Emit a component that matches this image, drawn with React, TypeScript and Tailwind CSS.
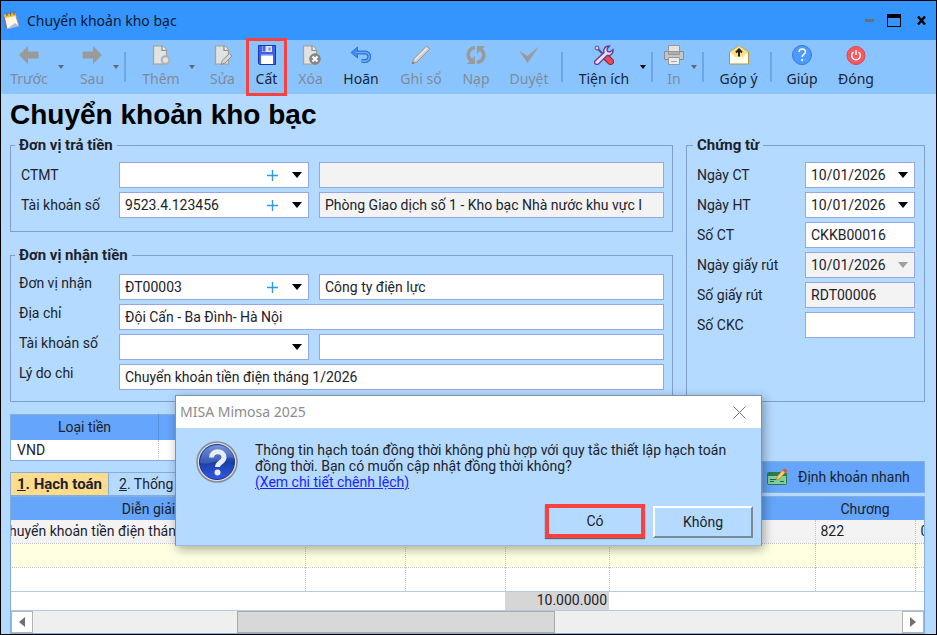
import type { ReactNode } from 'react';

interface Tool {
  label: string;
  icon: ReactNode;
  box: string;
  disabled?: boolean;
  menu?: boolean;
  marked?: boolean;
  divider?: boolean;
}

const GREY = '#9a9a9a';

function Icon({ children }: { children: ReactNode }) {
  return (
    <svg viewBox="0 0 20 20" className="h-5 w-5" fill="none" aria-hidden="true">
      {children}
    </svg>
  );
}

function Page() {
  return (
    <>
      <path d="M2.500.8h9l4 4v14.400h-13z" fill="#e2e2e2" stroke="#a2a2a2" strokeWidth="1.300" />
      <path d="M11 .8v4.500h4.500" fill="#f4f4f4" stroke="#8f8f8f" strokeWidth="1.300" />
    </>
  );
}

const tools: Tool[] = [
  {
    label: 'Trước',
    box: 'w-[50px]',
    disabled: true,
    menu: true,
    icon: <Icon><path d="M0 10 9 1v5.500h10.500v7H9V19z" fill={GREY} /></Icon>,
  },
  {
    label: 'Sau',
    box: 'ml-[7px] w-[34px]',
    disabled: true,
    menu: true,
    divider: true,
    icon: <Icon><path d="M20 10 11 1v5.500H.5v7H11V19z" fill={GREY} /></Icon>,
  },
  {
    label: 'Thêm',
    box: 'ml-[10px] w-[48px]',
    disabled: true,
    menu: true,
    icon: (
      <Icon>
        <Page />
        <circle cx="14.500" cy="15" r="3.800" fill="#e2e2e2" stroke="#b0b0b0" strokeWidth="2" />
      </Icon>
    ),
  },
  {
    label: 'Sửa',
    box: 'w-[47px]',
    disabled: true,
    icon: (
      <Icon>
        <Page />
        <path d="m8 19.500 1.500-4.500 7-6.500 2.500 2.500-7 7z" fill="#d6d6d6" stroke="#8f8f8f" />
      </Icon>
    ),
  },
  {
    label: 'Cất',
    box: 'w-[41px]',
    marked: true,
    icon: (
      <Icon>
        <path d="M1.500.5h17v19h-16l-1-1z" fill="#4060e8" stroke="#1c35b8" />
        <path d="M5 1h10v6H5z" fill="#dfe5fb" />
        <path d="M5.500 1h3v5.500h-3z" fill="#4060e8" />
        <path d="M11.500 2.500h2v3h-2z" fill="#7388d8" />
        <path d="M4 10.500h12v8.500H4z" fill="#fff" />
        <path d="M4 10h12" stroke="#b9c6f5" />
      </Icon>
    ),
  },
  {
    label: 'Xóa',
    box: 'w-[47px]',
    disabled: true,
    icon: (
      <Icon>
        <Page />
        <circle cx="14" cy="14" r="5.800" fill="#858585" />
        <path d="m11.500 11.500 5 5m0-5-5 5" stroke="#fff" strokeWidth="2" />
      </Icon>
    ),
  },
  {
    label: 'Hoãn',
    box: 'w-[54px]',
    icon: (
      <Icon>
        <path d="M6 7.500h8a4.300 4.300 0 0 1 0 8.600h-3.500" stroke="#2c74dc" strokeWidth="4" />
        <path d="M0 7.500 6.500 2v11z" fill="#3f8bf0" stroke="#2c74dc" />
        <path d="M5 7.500h9a4.300 4.300 0 0 1 0 8.600h-3" stroke="#69a9fb" strokeWidth="1.600" />
      </Icon>
    ),
  },
  {
    label: 'Ghi sổ',
    box: 'w-[66px]',
    disabled: true,
    icon: (
      <Icon>
        <path d="m1 19 1.500-5L15.500 1 19 4 6 17z" fill="#cdcdcd" stroke="#999" />
        <path d="m4 15 12-12" stroke="#ececec" strokeWidth="1.500" />
        <path d="m1 19 .8-2.800 2 1.800z" fill="#777" />
      </Icon>
    ),
  },
  {
    label: 'Nạp',
    box: 'w-[44px]',
    disabled: true,
    icon: (
      <Icon>
        <path d="M9 2.500C1 4 .5 12 5.500 16M11 17.500C19 16 19.500 8 14.500 4" stroke={GREY} strokeWidth="3.600" />
        <path d="M1 19h8v-8zM19 1h-8v8z" fill={GREY} />
      </Icon>
    ),
  },
  {
    label: 'Duyệt',
    box: 'w-[62px]',
    disabled: true,
    divider: true,
    icon: <Icon><path d="M0 5.500 8.500 18 20 1.500 8.500 11z" fill={GREY} /></Icon>,
  },
  {
    label: 'Tiện ích',
    box: 'ml-[8px] w-[64px]',
    menu: true,
    divider: true,
    icon: (
      <Icon>
        <path d="m3 3 8 8" stroke="#5a4d94" strokeWidth="2" />
        <circle cx="3" cy="3" r="2" fill="#cfc8ef" stroke="#5a4d94" />
        <path d="m12.500 12.500 4 4" stroke="#8f1f35" strokeWidth="7" strokeLinecap="round" />
        <path d="m12.500 12.500 4 4" stroke="#e84a55" strokeWidth="5" strokeLinecap="round" />
        <path
          d="M1 16 10 7.500c-1-3.500 1.500-7 5.500-6.500L13 4l.5 2.500L16 7l3-2.500c.5 4-2.500 6.500-6 6L4.500 19C2 20.500-.5 18 1 16z"
          fill="#e6dff8"
          stroke="#6b3f8f"
          strokeWidth="1.400"
        />
      </Icon>
    ),
  },
  {
    label: 'In',
    box: 'ml-[7px] w-[26px]',
    disabled: true,
    menu: true,
    divider: true,
    icon: (
      <Icon>
        <path d="M4.500.5h11v7h-11z" fill="#e3e3e3" stroke="#979797" />
        <path d="M.5 6.500h19v8H.5z" fill="#c6c6c6" stroke="#8b8b8b" />
        <path d="M4.500 6.500h11v3h-11z" fill="#b0b0b0" stroke="#979797" />
        <path d="M4.500 12.500h11v7h-11z" fill="#ececec" stroke="#979797" />
        <path d="M7 16.500h6" stroke="#a5a5a5" />
      </Icon>
    ),
  },
  {
    label: 'Góp ý',
    box: 'ml-[3px] w-[61px]',
    divider: true,
    icon: (
      <Icon>
        <path d="M.5 7 10 .8 19.500 7v12H.5z" fill="#fffdf0" stroke="#b8932e" />
        <path d="M1 7 10 1l9 6-5 5H6z" fill="#fbdf85" />
        <path d="M10 11.500V5M7 7.500l3-3 3 3" stroke="#222" strokeWidth="2" />
      </Icon>
    ),
  },
  {
    label: 'Giúp',
    box: 'ml-[4px] w-[50px]',
    icon: (
      <Icon>
        <circle cx="10" cy="10" r="9.500" fill="#4e9bff" stroke="#3579dc" />
        <path d="M7 7c0-4 6.500-4 6.500-.3 0 2.800-3.400 2.600-3.400 5.300" stroke="#fff" strokeWidth="1.500" />
        <circle cx="10.100" cy="15" r="1.100" fill="#fff" />
      </Icon>
    ),
  },
  {
    label: 'Đóng',
    box: 'w-[58px]',
    icon: (
      <Icon>
        <circle cx="10" cy="10.500" r="9" fill="#f8585f" stroke="#dd4550" />
        <path d="M7.500 7a4.300 4.300 0 1 0 5 0M10 5v5" stroke="#fff" strokeWidth="1.500" />
      </Icon>
    ),
  },
];

function Caret() {
  return (
    <svg viewBox="0 0 10 6" className="h-[6px] w-[10px]" fill="currentColor" aria-hidden="true">
      <path d="M0 0h10L5 6z" />
    </svg>
  );
}

function ToolButton({ tool }: { tool: Tool }) {
  return (
    <>
      <button
        disabled={tool.disabled}
        className={`relative flex shrink-0 flex-col items-center pt-[5px] whitespace-nowrap ${tool.box} ${
          tool.disabled ? 'text-[#7f8b99]' : 'text-[#16243a]'
        }`}
      >
        {tool.icon}
        <span className="mt-1 text-sm leading-5">{tool.label}</span>
        {tool.marked && <span className="absolute -inset-y-0.5 inset-x-0 z-10 border-3 border-[#f9423f]" />}
      </button>
      {tool.menu && (
        <button
          aria-label={`${tool.label} menu`}
          disabled={tool.disabled}
          className={`flex w-[14px] shrink-0 items-center justify-center ${tool.disabled ? 'text-[#5c6b7c]' : 'text-black'}`}
        >
          <svg viewBox="0 0 6 4" className="h-1 w-[6px]" fill="currentColor" aria-hidden="true">
            <path d="M0 0h6L3 4z" />
          </svg>
        </button>
      )}
      {tool.divider && <span className="mx-px my-3 w-[2px] shrink-0 bg-[#6fa5e6]" />}
    </>
  );
}

const fieldBorder = 'border border-[#93a6e6]';

function TextField({ id, label, value = '', readOnly = false }: { id: string; label?: string; value?: string; readOnly?: boolean }) {
  return (
    <input
      id={id}
      aria-label={label}
      defaultValue={value}
      readOnly={readOnly}
      className={`block h-[26px] w-full min-w-0 px-[5px] ${fieldBorder} ${readOnly ? 'bg-[#f3f3f3]' : 'bg-white'}`}
    />
  );
}

function Combo({ id, value = '', add = false, disabled = false }: { id: string; value?: string; add?: boolean; disabled?: boolean }) {
  return (
    <div className="relative w-full">
      <select
        id={id}
        disabled={disabled}
        defaultValue={value}
        className={`block h-[26px] w-full appearance-none pl-[5px] opacity-100 ${fieldBorder} ${disabled ? 'bg-[#f3f3f3]' : 'bg-white'}`}
      >
        <option>{value}</option>
      </select>
      {add && (
        <button aria-label="Thêm mới" className="absolute inset-y-0 right-[31px] flex items-center">
          <svg viewBox="0 0 11 11" className="h-[11px] w-[11px]" aria-hidden="true">
            <path d="M5.500 0v11M0 5.500h11" stroke="#2f9be8" strokeWidth="1.400" />
          </svg>
        </button>
      )}
      <span className={`pointer-events-none absolute inset-y-0 right-[7px] flex items-center ${disabled ? 'text-[#a0a0a0]' : 'text-black'}`}>
        <Caret />
      </span>
    </div>
  );
}

function Group({ title, className = '', children }: { title: string; className?: string; children: ReactNode }) {
  return (
    <fieldset className={`min-w-0 border border-[#7f9fd0] ${className}`}>
      <legend className="-ml-1 px-1 text-[15px] leading-[18px] font-bold">{title}</legend>
      {children}
    </fieldset>
  );
}

const voucherFields = [
  { id: 'ngay-ct', label: 'Ngày CT', value: '10/01/2026', select: true },
  { id: 'ngay-ht', label: 'Ngày HT', value: '10/01/2026', select: true },
  { id: 'so-ct', label: 'Số CT', value: 'CKKB00016' },
  { id: 'ngay-giay-rut', label: 'Ngày giấy rút', value: '10/01/2026', select: true, locked: true },
  { id: 'so-giay-rut', label: 'Số giấy rút', value: 'RDT00006', locked: true },
  { id: 'so-ckc', label: 'Số CKC', value: '' },
];

const formRow = 'grid grid-cols-[100px_190px_minmax(0,1fr)]';

function PaymentForm() {
  return (
    <div className="flex gap-[13px]">
      <div className="flex min-w-0 flex-1 flex-col gap-[14px]">
        <Group title="Đơn vị trả tiền" className="pr-2 pb-[13px] pl-2">
          <div className="flex flex-col gap-1 pt-2">
            <div className={`${formRow} items-center`}>
              <label htmlFor="ctmt" className="pl-[2px]">CTMT</label>
              <Combo id="ctmt" add />
              <div className="pl-[10px]"><TextField id="ctmt-ten" label="Tên CTMT" readOnly /></div>
            </div>
            <div className={`${formRow} items-center`}>
              <label htmlFor="tk-tra" className="pl-[2px]">Tài khoản số</label>
              <Combo id="tk-tra" value="9523.4.123456" add />
              <div className="pl-[10px]">
                <TextField id="kho-bac" label="Kho bạc" value="Phòng Giao dịch số 1 - Kho bạc Nhà nước khu vực I" readOnly />
              </div>
            </div>
          </div>
        </Group>

        <Group title="Đơn vị nhận tiền" className="pr-2 pb-[11px] pl-2">
          <div className="flex flex-col gap-1 pt-[10px]">
            <div className={formRow}>
              <label htmlFor="dv-nhan">Đơn vị nhận</label>
              <Combo id="dv-nhan" value="ĐT00003" add />
              <div className="pl-[10px]"><TextField id="dv-ten" label="Tên đơn vị" value="Công ty điện lực" /></div>
            </div>
            <div className={formRow}>
              <label htmlFor="dia-chi">Địa chỉ</label>
              <div className="col-span-2"><TextField id="dia-chi" value="Đội Cấn - Ba Đình- Hà Nội" /></div>
            </div>
            <div className={formRow}>
              <label htmlFor="tk-nhan">Tài khoản số</label>
              <Combo id="tk-nhan" />
              <div className="pl-[10px]"><TextField id="ngan-hang" label="Ngân hàng" /></div>
            </div>
            <div className={formRow}>
              <label htmlFor="ly-do">Lý do chi</label>
              <div className="col-span-2"><TextField id="ly-do" value="Chuyển khoản tiền điện tháng 1/2026" /></div>
            </div>
          </div>
        </Group>
      </div>

      <Group title="Chứng từ" className="w-[239px] shrink-0 pr-[9px] pl-[10px]">
        <div className="flex flex-col gap-1 pt-2">
          {voucherFields.map((field) => (
            <div key={field.id} className="grid grid-cols-[minmax(0,1fr)_110px] items-center">
              <label htmlFor={field.id}>{field.label}</label>
              {field.select ? (
                <Combo id={field.id} value={field.value} disabled={field.locked} />
              ) : (
                <TextField id={field.id} value={field.value} readOnly={field.locked} />
              )}
            </div>
          ))}
        </div>
      </Group>
    </div>
  );
}

const dotted = 'border-r border-dotted border-[#c4c4c4]';

function EntryGrid() {
  return (
    <div className="border border-[#86aedd] bg-white">
      <div className="overflow-hidden">
        <table className="-ml-[19px] w-[calc(100%+19px)] table-fixed border-collapse">
          <colgroup>
            <col className="w-[313px]" />
            <col className="w-[100px]" />
            <col className="w-[100px]" />
            <col className="w-[104px]" />
            <col />
            <col className="w-[100px]" />
            <col className="w-[9px]" />
          </colgroup>
          <thead>
            <tr className="h-[23px] bg-[#65a5fb]">
              <th className="font-normal">Diễn giải</th>
              <th /><th /><th /><th />
              <th className="font-normal">Chương</th>
              <th />
            </tr>
          </thead>
          <tbody>
            <tr className="h-[23px] border-b border-dotted border-[#c4c4c4] bg-[#f3f3f3]">
              <td className={`pl-2 whitespace-nowrap ${dotted}`}>Chuyển khoản tiền điện tháng 1/2026</td>
              <td className={dotted} /><td className={dotted} /><td className={dotted} /><td className={dotted} />
              <td className={`pl-[5px] ${dotted}`}>822</td>
              <td className="overflow-hidden pl-[5px]">098</td>
            </tr>
            <tr className="h-6 border-b border-dotted border-[#c4c4c4] bg-[#ffffe1]">
              <td className={dotted} /><td className={dotted} /><td className={dotted} /><td className={dotted} />
              <td className={dotted} /><td className={dotted} /><td />
            </tr>
            <tr className="h-6">
              <td className={dotted} /><td className={dotted} /><td className={dotted} /><td className={dotted} />
              <td className={dotted} /><td className={dotted} /><td />
            </tr>
          </tbody>
          <tfoot>
            <tr className="h-[19px] border-y border-[#b4cbe4]">
              <td colSpan={3} />
              <td className="bg-[#d6d6d6] pr-[2px] text-right leading-[17px]">10.000.000</td>
              <td colSpan={3} />
            </tr>
          </tfoot>
        </table>
      </div>
      <div className="flex h-[22px] bg-[#efefef]">
        <button aria-label="Cuộn trái" className="flex w-[22px] items-center justify-center border border-[#b4b4b4] bg-white">
          <svg viewBox="0 0 6 10" className="h-[10px] w-[6px]" aria-hidden="true"><path d="M6 0v10L0 5z" fill="#707070" /></svg>
        </button>
        <span className="grow-[205]" />
        <span className="grow-[317] border border-[#ababab] bg-[#d8d8d8]" />
        <span className="grow-[348]" />
        <button aria-label="Cuộn phải" className="flex w-[22px] items-center justify-center border border-[#b4b4b4] bg-white">
          <svg viewBox="0 0 6 10" className="h-[10px] w-[6px]" aria-hidden="true"><path d="M0 0v10l6-5z" fill="#707070" /></svg>
        </button>
      </div>
    </div>
  );
}

function ConfirmDialog() {
  return (
    <div
      role="dialog"
      aria-labelledby="dialog-title"
      className="absolute inset-x-0 top-[394px] z-20 mx-auto w-[587px] border border-[#7e93ad] border-b-[#9dbbe0] bg-[#b5daff] shadow-[2px_3px_10px_rgba(0,0,0,0.35)]"
    >
      <div className="flex h-8 items-center justify-between bg-white pr-[15px] pl-1 font-['Noto_Sans',sans-serif] text-[#8c8c8c]">
        <h2 id="dialog-title" className="text-sm">MISA Mimosa 2025</h2>
        <button aria-label="Close">
          <svg viewBox="0 0 13 13" className="h-[13px] w-[13px]" aria-hidden="true">
            <path d="m.5.5 12 12m0-12-12 12" stroke="#777" />
          </svg>
        </button>
      </div>
      <div className="flex gap-[17px] pt-[13px] pl-[20px]">
        <svg viewBox="0 0 42 42" className="h-[42px] w-[42px] shrink-0" aria-hidden="true">
          <defs>
            <linearGradient id="orb" x1="0" y1="0" x2="0" y2="1">
              <stop offset="0" stopColor="#5e83da" />
              <stop offset=".5" stopColor="#173fa4" />
              <stop offset="1" stopColor="#3457e8" />
            </linearGradient>
          </defs>
          <circle cx="21" cy="21" r="20" fill="#d9dce2" stroke="#858c99" strokeWidth="1.500" />
          <circle cx="21" cy="21" r="17.500" fill="url(#orb)" stroke="#1b3480" />
          <path d="M4 22C5-1 37-1 38 17 28 14 17 25 4 22z" fill="#fff" opacity=".15" />
          <path d="M15.500 16.500c0-8 12.500-7.500 12.500 0 0 5-6.500 4.500-6.500 9.500" fill="none" stroke="#e9ebf2" strokeWidth="5" />
          <circle cx="21.500" cy="31.500" r="3" fill="#e9ebf2" />
        </svg>
        <div className="pt-[1px] leading-4">
          <p>
            Thông tin hạch toán đồng thời không phù hợp với quy tắc thiết lập hạch toán
            <br />
            đồng thời. Bạn có muốn cập nhật đồng thời không?
          </p>
          <a href="#chi-tiet" className="text-[#2222ff] underline">(Xem chi tiết chênh lệch)</a>
        </div>
      </div>
      <div className="mt-[14px] flex justify-end gap-2 pr-2 pb-[7px]">
        <button className="h-[34px] w-[100px] border-4 border-[#f9423f] shadow-[0_1px_1px_#666]">Có</button>
        <button className="mt-[2px] h-8 w-[100px] border-2 border-t-white border-r-[#7d8793] border-b-[#7d8793] border-l-white">
          Không
        </button>
      </div>
    </div>
  );
}

export default function App() {
  return (
    <div className="relative flex min-h-screen flex-col border border-black bg-[#b5daff] font-[Roboto,'Liberation_Sans',sans-serif] text-sm leading-[18px] text-[#1c222c]">
      <header className="flex h-[39px] items-center bg-[#3495ff] pr-[10px] pl-[2px] font-['Noto_Sans',sans-serif]">
        <svg viewBox="0 0 17 19" className="h-[19px] w-[17px]" aria-hidden="true">
          <path d="M1 4 12 2l4 13-12 3z" fill="#fff8dc" stroke="#9a8fae" />
          <path d="m1 4 3 14-2-1L.5 6z" fill="#7b6bb0" />
          <path d="m1 4 11-2 1 3-11 2z" fill="#f6b93b" />
          <path d="M4 5V1.500M7.500 4.500V1M11 4V.5" stroke="#7a6440" strokeWidth="1.200" />
          <path d="m4 18 12-3-4-3z" fill="#a7bdf0" />
        </svg>
        <span className="ml-[7px] flex-1 text-sm text-[#0a1830]">Chuyển khoản kho bạc</span>
        <div className="flex items-center gap-[13px]">
          <button aria-label="Minimize" className="h-[3px] w-[9px] bg-[#66707c]" />
          <button aria-label="Maximize" className="h-[13px] w-[14px] border border-t-4 border-black" />
          <button aria-label="Close window" className="ml-[3px]">
            <svg viewBox="0 0 9 9" className="h-[9px] w-[9px]" aria-hidden="true">
              <path d="m1 .5 7 8m0-8-7 8" stroke="#000" strokeWidth="2.400" />
            </svg>
          </button>
        </div>
      </header>

      <nav className="flex h-[54px] bg-[#8ac4ff] pl-[3px] font-['Noto_Sans',sans-serif]">
        {tools.map((tool) => (
          <ToolButton key={tool.label} tool={tool} />
        ))}
      </nav>

      <main className="flex flex-1 flex-col pr-[11px] pl-[9px]">
        <h1 className="font-['Liberation_Sans',sans-serif] text-[28px] leading-[42px] font-bold text-black">Chuyển khoản kho bạc</h1>

        <PaymentForm />

        <table className="mt-3 w-3/4 table-fixed border border-[#86aedd] bg-white">
          <thead>
            <tr className="h-[25px] bg-[#65a5fb]">
              <th className="w-[148px] border-r border-[#5690e0] font-normal">Loại tiền</th>
              <th />
            </tr>
          </thead>
          <tbody>
            <tr className="h-[21px]">
              <td className={`pl-[6px] ${dotted}`}>VND</td>
              <td />
            </tr>
          </tbody>
        </table>

        <div className="flex h-[35px] items-start justify-between">
          <div role="tablist" className="flex self-end">
            <button role="tab" aria-selected="true" className="h-6 border border-[#86aedd] bg-[#ffdc8c] px-[6px] text-[15px] font-bold">
              <u>1</u>. Hạch toán
            </button>
            <button role="tab" aria-selected="false" className="h-6 border border-l-0 border-[#86aedd] px-[10px]">
              <u>2</u>. Thống kê
            </button>
          </div>
          <button className="flex h-8 w-[163px] items-center gap-[10px] border border-[#86aedd] bg-[#65a5fb] pl-1">
            <svg viewBox="0 0 21 18" className="h-[18px] w-[21px]" aria-hidden="true">
              <rect x=".5" y="4.500" width="19" height="12" rx="1" fill="#7fcf9c" stroke="#2f7a4d" />
              <path d="M1 5h18v3H1z" fill="#2f7a4d" />
              <path d="M3 11.500h6M3 13.500h4M13 13.500h4" stroke="#22643c" />
              <path d="m9 12 1.500-4 6-6.500 2.500 2-6 7z" fill="#f7cf6b" stroke="#a57b2c" strokeWidth=".7" />
              <path d="m15.500 2.500 2-2 3 2-2 2.500z" fill="#e0524a" />
            </svg>
            Định khoản nhanh
          </button>
        </div>

        <EntryGrid />
      </main>

      <ConfirmDialog />
    </div>
  );
}
